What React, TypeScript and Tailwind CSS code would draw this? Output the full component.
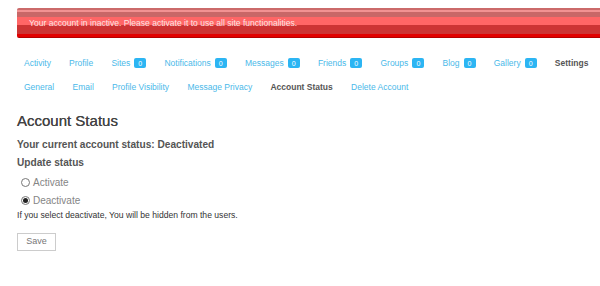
const mainTabs = [
  { label: 'Activity' },
  { label: 'Profile' },
  { label: 'Sites', count: 0 },
  { label: 'Notifications', count: 0 },
  { label: 'Messages', count: 0 },
  { label: 'Friends', count: 0 },
  { label: 'Groups', count: 0 },
  { label: 'Blog', count: 0 },
  { label: 'Gallery', count: 0 },
  { label: 'Settings', active: true },
]

const subTabs = [
  { label: 'General' },
  { label: 'Email' },
  { label: 'Profile Visibility' },
  { label: 'Message Privacy' },
  { label: 'Account Status', active: true },
  { label: 'Delete Account' },
]

function Radio({ checked, label }: { checked?: boolean; label: string }) {
  return (
    <label className="flex h-[18px] items-center gap-[3px] pl-[4px]">
      <span className="flex h-[9px] w-[9px] items-center justify-center rounded-full border border-[#777] bg-white">
        {checked && <span className="h-[5px] w-[5px] rounded-full bg-[#222]" />}
      </span>
      <span className="text-[10px] text-[#858585]">{label}</span>
    </label>
  )
}

export default function App() {
  return (
    <div className="h-[286px] w-[600px] overflow-hidden bg-white font-['Liberation_Sans',Arial,sans-serif]">
      <div className="pl-[17px] pt-[8px]">
        <div className="flex h-[30px] items-center rounded-l-[2px] bg-[linear-gradient(to_bottom,#cb6a6a_0px,#cb6a6a_2px,#f29292_2px,#f29292_4px,#c96767_4px,#c96767_9px,#ff6666_9px,#ff6666_17px,#cc3434_17px,#cc3434_26px,#e20000_26px,#e20000_29px,#b30000_29px)] pl-[12px]">
          <p className="text-[8.55px] text-[#fde4e4]">
            Your account in inactive. Please activate it to use all site functionalities.
          </p>
        </div>
      </div>

      <nav className="mt-[19px] flex h-[12px] items-center gap-[18.2px] pl-[24px] text-[8.5px]">
        {mainTabs.map((t) => (
          <span key={t.label} className="flex items-center gap-[4px]">
            <span className={t.active ? 'font-bold text-[#555]' : 'text-[#4ab9e9]'}>{t.label}</span>
            {t.count !== undefined && (
              <span className="flex h-[10px] w-[12px] items-center justify-center rounded-[2px] bg-[#2cb5f3] text-[7px] leading-none text-white">
                {t.count}
              </span>
            )}
          </span>
        ))}
      </nav>

      <nav className="mt-[12px] flex h-[12px] items-center gap-[18.3px] pl-[24px] text-[8.5px]">
        {subTabs.map((t) => (
          <span key={t.label} className={t.active ? 'font-bold text-[#555]' : 'text-[#4ab9e9]'}>
            {t.label}
          </span>
        ))}
      </nav>

      <section className="px-[17px] pt-[19px]">
        <h2 className="text-[15px] leading-[18px] font-normal text-[#444] [text-shadow:0_0_0.4px_#444]">
          Account Status
        </h2>
        <p className="mt-[8px] text-[10.15px] leading-[14px] font-bold text-[#555]">
          Your current account status: Deactivated
        </p>
        <p className="mt-[4px] text-[10.15px] leading-[14px] font-bold text-[#555]">Update status</p>
        <div className="mt-[3px] flex flex-col">
          <Radio label="Activate" />
          <Radio checked label="Deactivate" />
        </div>
        <p className="text-[8.6px] leading-[12px] text-[#333]">
          If you select deactivate, You will be hidden from the users.
        </p>
        <button className="mt-[12px] flex h-[18px] w-[39px] items-center justify-center border border-[#ccc] bg-white text-[9px] text-[#777]">
          Save
        </button>
      </section>
    </div>
  )
}
